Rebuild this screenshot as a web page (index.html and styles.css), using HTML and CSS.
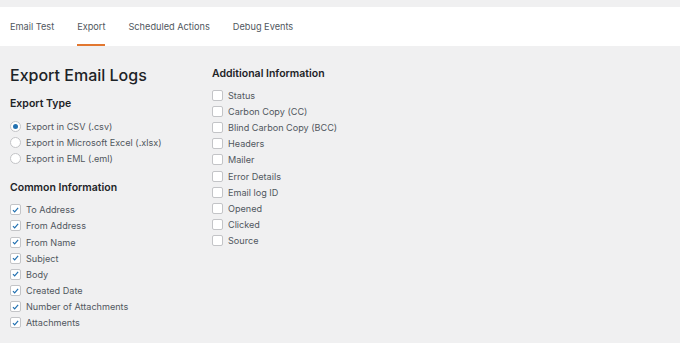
FILE: index.html
```html
<!DOCTYPE html>
<html lang="en">
<head>
    <meta charset="UTF-8">
    <meta name="viewport" content="width=device-width, initial-scale=1.0">
    <title>Export Email Logs</title>
    <link rel="stylesheet" href="styles.css">
</head>
<body>

    <!-- Tabs -->
    <nav class="tabs">
        <a class="tab">Email Test</a>
        <a class="tab active">Export</a>
        <a class="tab">Scheduled Actions</a>
        <a class="tab">Debug Events</a>
    </nav>

    <div class="content">
        <!-- Left column -->
        <div class="col col-left">
            <h1>Export Email Logs</h1>

            <h2>Export Type</h2>
            <ul class="options">
                <li><span class="radio checked"></span>Export in CSV (.csv)</li>
                <li><span class="radio"></span>Export in Microsoft Excel (.xlsx)</li>
                <li><span class="radio"></span>Export in EML (.eml)</li>
            </ul>

            <h2 class="spaced">Common Information</h2>
            <ul class="options">
                <li><span class="box checked"><svg viewBox="0 0 12 12"><path d="M2.6 6.2l2.3 2.4 4.6-5.4"/></svg></span>To Address</li>
                <li><span class="box checked"><svg viewBox="0 0 12 12"><path d="M2.6 6.2l2.3 2.4 4.6-5.4"/></svg></span>From Address</li>
                <li><span class="box checked"><svg viewBox="0 0 12 12"><path d="M2.6 6.2l2.3 2.4 4.6-5.4"/></svg></span>From Name</li>
                <li><span class="box checked"><svg viewBox="0 0 12 12"><path d="M2.6 6.2l2.3 2.4 4.6-5.4"/></svg></span>Subject</li>
                <li><span class="box checked"><svg viewBox="0 0 12 12"><path d="M2.6 6.2l2.3 2.4 4.6-5.4"/></svg></span>Body</li>
                <li><span class="box checked"><svg viewBox="0 0 12 12"><path d="M2.6 6.2l2.3 2.4 4.6-5.4"/></svg></span>Created Date</li>
                <li><span class="box checked"><svg viewBox="0 0 12 12"><path d="M2.6 6.2l2.3 2.4 4.6-5.4"/></svg></span>Number of Attachments</li>
                <li><span class="box checked"><svg viewBox="0 0 12 12"><path d="M2.6 6.2l2.3 2.4 4.6-5.4"/></svg></span>Attachments</li>
            </ul>
        </div>

        <!-- Right column -->
        <div class="col col-right">
            <h2>Additional Information</h2>
            <ul class="options">
                <li><span class="box"></span>Status</li>
                <li><span class="box"></span>Carbon Copy (CC)</li>
                <li><span class="box"></span>Blind Carbon Copy (BCC)</li>
                <li><span class="box"></span>Headers</li>
                <li><span class="box"></span>Mailer</li>
                <li><span class="box"></span>Error Details</li>
                <li><span class="box"></span>Email log ID</li>
                <li><span class="box"></span>Opened</li>
                <li><span class="box"></span>Clicked</li>
                <li><span class="box"></span>Source</li>
            </ul>
        </div>
    </div>

</body>
</html>
```

FILE: styles.css
```css
body {
    margin: 0;
    background: #f0f0f1;
    font-family: Inter, "Liberation Sans", Arial, sans-serif;
    color: #1d2327;
}

/* Tabs */
.tabs {
    margin-top: 7px;
    background: #fff;
    height: 39px;
    display: flex;
    gap: 23px;
    padding-left: 10px;
}

.tab {
    display: flex;
    align-items: center;
    font-size: 9.2px;
    color: #50575e;
    border-bottom: 2px solid transparent;
    padding-top: 2px;
    box-sizing: border-box;
}

.tab.active {
    border-bottom-color: #e27730;
}

/* Content */
.content {
    display: flex;
    padding: 19px 0 0 10px;
}

.col-left {
    width: 202px;
}

h1 {
    margin: 0 0 10px;
    font-size: 16px;
    line-height: 20px;
    font-weight: 500;
}

h2 {
    margin: 0 0 6px;
    font-size: 10.5px;
    line-height: 17px;
    font-weight: 600;
}

h2.spaced {
    margin-top: 12px;
}

.col-right h2 {
    margin-top: 0;
    margin-bottom: 5px;
}

.options {
    list-style: none;
    margin: 0;
    padding: 0;
}

.options li {
    display: flex;
    align-items: center;
    height: 16.2px;
    font-size: 9.1px;
    color: #50575e;
}

/* Radios and checkboxes */
.radio,
.box {
    width: 11px;
    height: 11px;
    box-sizing: border-box;
    border: 1px solid #c3c4c7;
    background: #fff;
    margin-right: 5px;
    flex-shrink: 0;
    display: flex;
    align-items: center;
    justify-content: center;
}

.radio {
    border-radius: 50%;
}

.radio.checked::after {
    content: "";
    width: 5px;
    height: 5px;
    border-radius: 50%;
    background: #2271b1;
}

.box {
    border-radius: 2px;
}

.box svg {
    width: 10px;
    height: 10px;
    fill: none;
    stroke: #2271b1;
    stroke-width: 1.6;
}
```
